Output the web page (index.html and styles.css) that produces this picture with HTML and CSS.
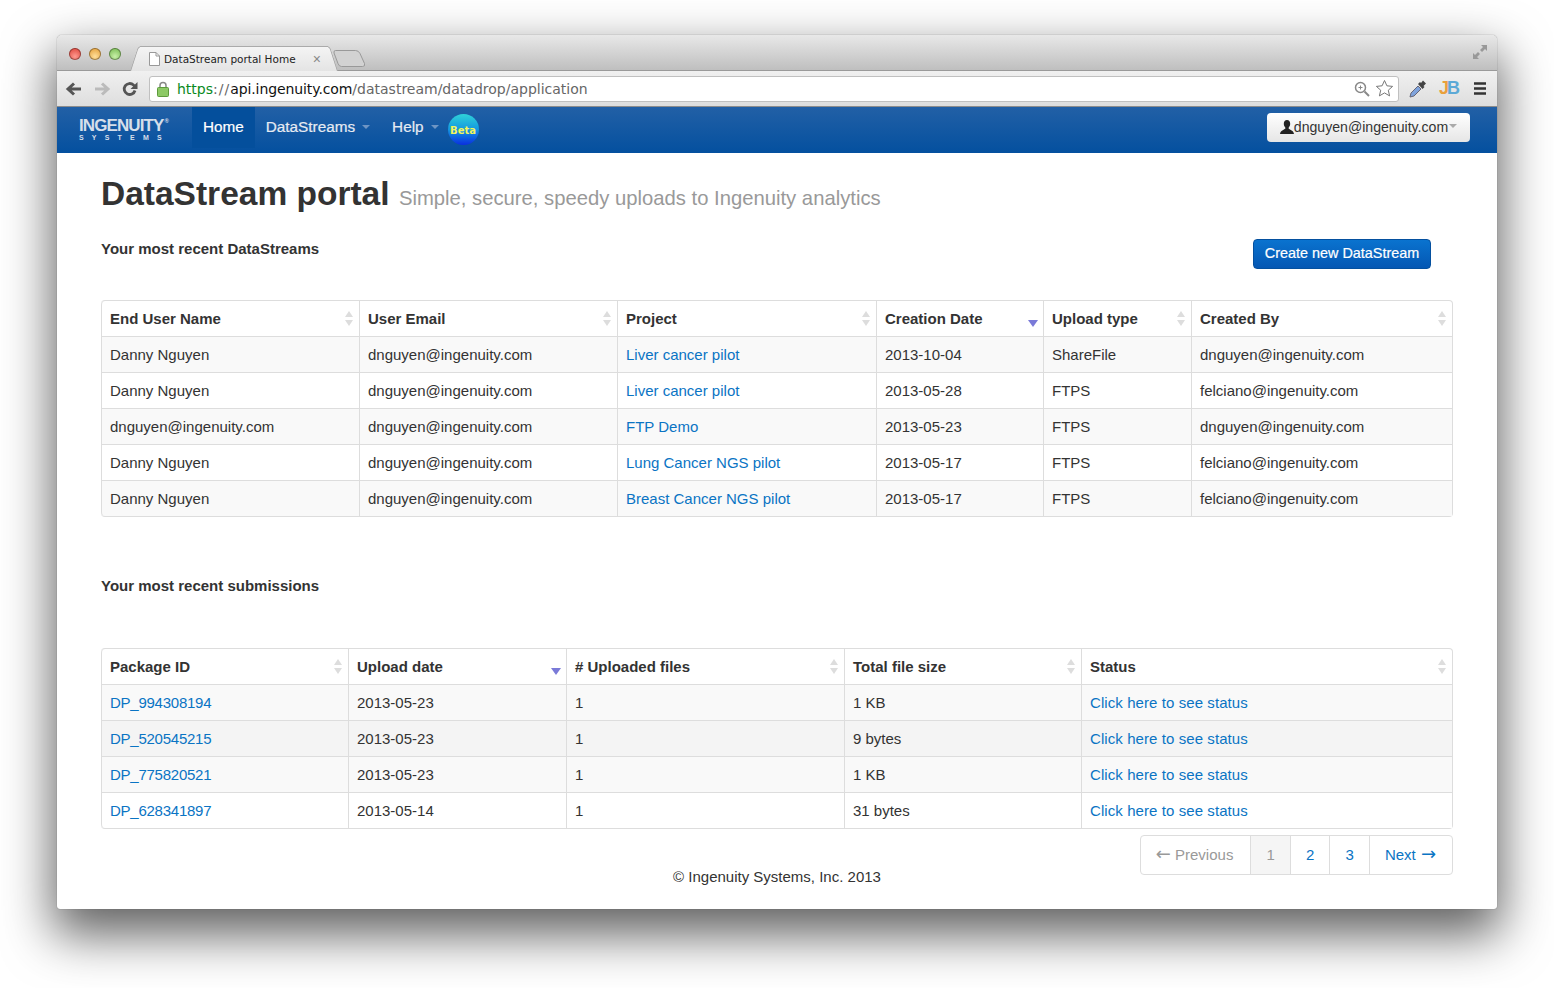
FILE: index.html
```html
<!DOCTYPE html>
<html lang="en">
<head>
    <meta charset="UTF-8">
    <title>DataStream portal Home</title>
    <link rel="stylesheet" href="styles.css">
</head>
<body>

<div class="window">
    <div class="tabstrip">
        <div class="lights">
            <span class="light red"></span>
            <span class="light amber"></span>
            <span class="light green"></span>
        </div>
        <div class="tab">
            <svg class="page-icon" width="11" height="14" viewBox="0 0 11 14"><path d="M.5.5h6.500l3.500 3.500v9.500h-10z" fill="#fff" stroke="#999"/><path d="M7 .5v3.500h3.500" fill="none" stroke="#999"/></svg>
            <span class="tab-title">DataStream portal Home</span>
            <span class="tab-close">&#215;</span>
        </div>
        <svg class="new-tab" width="33" height="17" viewBox="0 0 33 17"><path d="M2.500.5h20q3 0 4.500 3l4.500 10q1 3-2 3h-21q-2.500 0-3.500-3L1 3Q.5.500 2.500.5z" fill="#d2d2d2" stroke="#999"/></svg>
        <svg class="fullscreen" width="16" height="16" viewBox="0 0 16 16"><path d="M9 1h6v6l-2-2-3 3-2-2 3-3zM7 15H1V9l2 2 3-3 2 2-3 3z" fill="#999"/></svg>
    </div>

    <div class="toolbar">
        <svg class="tool" width="18" height="16" viewBox="0 0 18 16"><path d="M16 8H4M9 2.500 3 8l6 5.500" fill="none" stroke="#555" stroke-width="3"/></svg>
        <svg class="tool" width="18" height="16" viewBox="0 0 18 16"><path d="M2 8h12M9 2.500 15 8l-6 5.500" fill="none" stroke="#bbb" stroke-width="3"/></svg>
        <svg class="tool" width="18" height="18" viewBox="0 0 18 18"><path d="M14 10.500A5.500 5.500 0 1 1 12.500 5L15 7" fill="none" stroke="#555" stroke-width="2.800"/><path d="M16.500 2v7h-7z" fill="#555"/></svg>
        <div class="omnibox">
            <svg class="lock" width="12" height="16" viewBox="0 0 12 16"><path d="M3 7V4.500a3 3 0 0 1 6 0V7" fill="none" stroke="#888" stroke-width="1.500"/><rect x=".5" y="6.500" width="11" height="9" rx="1" fill="#8cc965" stroke="#5d9a3c"/></svg>
            <span class="url"><span class="url-scheme">https</span><span class="url-rest url-sep">://</span><span class="url-host">api.ingenuity.com</span><span class="url-rest">/datastream/datadrop/application</span></span>
            <svg class="zoom-icon" width="16" height="16" viewBox="0 0 16 16"><circle cx="6.500" cy="6.500" r="5" fill="none" stroke="#888" stroke-width="1.500"/><path d="M10.500 10.500 15 15" stroke="#888" stroke-width="2"/><path d="M4.500 6.500h4M6.500 4.500v4" stroke="#888"/></svg>
            <svg class="star" width="19" height="19" viewBox="0 0 19 19"><path d="m9.500 1.500 2.400 5.300 5.700.6-4.300 3.800 1.300 5.700-5.100-3-5.100 3 1.300-5.700L1.400 7.400l5.700-.6z" fill="#fff" stroke="#777"/></svg>
        </div>
        <svg class="dropper" width="20" height="20" viewBox="0 0 20 20"><path d="M2 18l1-4 7-7 3 3-7 7z" fill="#7fa3dc" stroke="#667"/><path d="M10 5l2-2 1 1 2-2.500 3 3L15.500 7l1 1-2 2z" fill="#444"/></svg>
        <span class="jb"><span class="jb-j">J</span><span class="jb-b">B</span></span>
        <svg class="menu-icon" width="14" height="13" viewBox="0 0 14 13"><path d="M1 1.500h12M1 6.500h12M1 11.500h12" stroke="#333" stroke-width="2.500"/></svg>
    </div>

    <nav class="navbar">
        <a class="brand">
            <span class="brand-name">INGENUITY<sup>&#174;</sup></span>
            <span class="brand-sub">SYSTEMS</span>
        </a>
        <ul class="nav">
            <li class="nav-item active">Home</li>
            <li class="nav-item">DataStreams<span class="caret"></span></li>
            <li class="nav-item">Help<span class="caret"></span></li>
        </ul>
        <span class="beta">Beta</span>
        <button class="user-btn">
            <svg width="14" height="14" viewBox="0 0 14 14"><path d="M7 0c2 0 3.200 1.500 3.200 3.700 0 1.700-.8 3-1.500 3.800v1.300C10 9.800 13.500 10.500 14 14H0c.5-3.500 4-4.200 5.300-5.200V7.500c-.7-.8-1.500-2.100-1.500-3.800C3.800 1.500 5 0 7 0z" fill="#222"/></svg>dnguyen@ingenuity.com<span class="caret dark"></span>
        </button>
    </nav>

    <div class="content">
        <h1>DataStream portal <small>Simple, secure, speedy uploads to Ingenuity analytics</small></h1>

        <div class="section-head">
            <h4>Your most recent DataStreams</h4>
            <button class="btn-primary">Create new DataStream</button>
        </div>

        <table class="data-table">
            <colgroup>
                <col class="c258"><col class="c258"><col class="c259"><col class="c167"><col class="c148"><col>
            </colgroup>
            <thead>
                <tr>
                    <th class="sortable">End User Name</th>
                    <th class="sortable">User Email</th>
                    <th class="sortable">Project</th>
                    <th class="sorted">Creation Date</th>
                    <th class="sortable">Upload type</th>
                    <th class="sortable">Created By</th>
                </tr>
            </thead>
            <tbody>
                <tr><td>Danny Nguyen</td><td>dnguyen@ingenuity.com</td><td><a>Liver cancer pilot</a></td><td>2013-10-04</td><td>ShareFile</td><td>dnguyen@ingenuity.com</td></tr>
                <tr><td>Danny Nguyen</td><td>dnguyen@ingenuity.com</td><td><a>Liver cancer pilot</a></td><td>2013-05-28</td><td>FTPS</td><td>felciano@ingenuity.com</td></tr>
                <tr><td>dnguyen@ingenuity.com</td><td>dnguyen@ingenuity.com</td><td><a>FTP Demo</a></td><td>2013-05-23</td><td>FTPS</td><td>dnguyen@ingenuity.com</td></tr>
                <tr><td>Danny Nguyen</td><td>dnguyen@ingenuity.com</td><td><a>Lung Cancer NGS pilot</a></td><td>2013-05-17</td><td>FTPS</td><td>felciano@ingenuity.com</td></tr>
                <tr><td>Danny Nguyen</td><td>dnguyen@ingenuity.com</td><td><a>Breast Cancer NGS pilot</a></td><td>2013-05-17</td><td>FTPS</td><td>felciano@ingenuity.com</td></tr>
            </tbody>
        </table>

        <h4 class="submissions-head">Your most recent submissions</h4>

        <table class="data-table submissions">
            <colgroup>
                <col class="c247"><col class="c218"><col class="c278"><col class="c237"><col>
            </colgroup>
            <thead>
                <tr>
                    <th class="sortable">Package ID</th>
                    <th class="sorted">Upload date</th>
                    <th class="sortable"># Uploaded files</th>
                    <th class="sortable">Total file size</th>
                    <th class="sortable">Status</th>
                </tr>
            </thead>
            <tbody>
                <tr><td><a>DP_994308194</a></td><td>2013-05-23</td><td>1</td><td>1 KB</td><td><a>Click here to see status</a></td></tr>
                <tr class="hovered"><td><a>DP_520545215</a></td><td>2013-05-23</td><td>1</td><td>9 bytes</td><td><a>Click here to see status</a></td></tr>
                <tr><td><a>DP_775820521</a></td><td>2013-05-23</td><td>1</td><td>1 KB</td><td><a>Click here to see status</a></td></tr>
                <tr><td><a>DP_628341897</a></td><td>2013-05-14</td><td>1</td><td>31 bytes</td><td><a>Click here to see status</a></td></tr>
            </tbody>
        </table>

        <ul class="pagination">
            <li class="page prev"><span class="arrow">&#8592;</span> Previous</li>
            <li class="page num current">1</li>
            <li class="page num">2</li>
            <li class="page num">3</li>
            <li class="page next">Next <span class="arrow">&#8594;</span></li>
        </ul>

        <p class="footer">&#169; Ingenuity Systems, Inc. 2013</p>
    </div>
</div>

</body>
</html>
```

FILE: styles.css
```css
html, body {
    height: 100%;
}
body {
    margin: 0;
    padding: 35px 57px 0;
    box-sizing: border-box;
    background: #fff;
    overflow: hidden;
    font-family: "Liberation Sans", Arial, sans-serif;
    font-size: 15px;
    color: #333;
}
.window {
    height: 874px;
    background: #fff;
    border-radius: 5px 5px 3px 3px;
    box-shadow: 0 0 1px 0 #555, 0 22px 50px 4px rgba(0, 0, 0, 0.62);
}

/* browser chrome */
.tabstrip {
    position: relative;
    z-index: 0;
    height: 36px;
    box-sizing: border-box;
    display: flex;
    align-items: flex-end;
    padding: 0 9px 0 12px;
    background: linear-gradient(#e8e8e8, #bfbfbf);
    border-radius: 5px 5px 0 0;
    border-bottom: 1px solid #9a9a9a;
}
.lights {
    display: flex;
    gap: 8px;
    align-self: flex-start;
    margin-top: 13px;
}
.light {
    width: 12px;
    height: 12px;
    border-radius: 50%;
    box-shadow: inset 0 0 0 1px rgba(0, 0, 0, 0.35);
}
.red {
    background: radial-gradient(circle at 50% 70%, #ff9a90, #d9382e);
}
.amber {
    background: radial-gradient(circle at 50% 70%, #ffdf9a, #e0962a);
}
.green {
    background: radial-gradient(circle at 50% 70%, #c8f0a8, #6cb345);
}
.tab {
    position: relative;
    width: 188px;
    height: 25px;
    box-sizing: border-box;
    margin: 0 0 -1px 19px;
    padding: 0 7px 0 9px;
    display: flex;
    align-items: center;
    gap: 4px;
    background: linear-gradient(#f4f4f4, #e4e4e4);
    border-top: 1px solid #aaa;
}
.tab::before,
.tab::after {
    content: "";
    position: absolute;
    top: -1px;
    bottom: 0;
    width: 20px;
    box-sizing: border-box;
    z-index: -1;
    background: linear-gradient(#f4f4f4, #e4e4e4);
    border-top: 1px solid #aaa;
}
.tab::before {
    left: -6px;
    border-left: 1px solid #aaa;
    border-radius: 4px 0 0 0;
    transform: skewX(-18deg);
}
.tab::after {
    right: -6px;
    border-right: 1px solid #aaa;
    border-radius: 0 4px 0 0;
    transform: skewX(18deg);
}
.tab-title {
    flex: 1;
    font-family: "DejaVu Sans", sans-serif;
    font-size: 10.500px;
    color: #222;
    white-space: nowrap;
}
.tab-close {
    font-size: 14px;
    color: #888;
}
.new-tab {
    margin: 0 0 3px 5px;
}
.fullscreen {
    margin-left: auto;
    align-self: flex-start;
    margin-top: 9px;
}
.toolbar {
    height: 36px;
    box-sizing: border-box;
    display: flex;
    align-items: center;
    padding: 0 10px 0 8px;
    background: linear-gradient(#f0f0f0, #dedede);
    border-bottom: 1px solid #8c8c8c;
}
.tool {
    margin-right: 10px;
    flex: none;
}
.omnibox {
    flex: 1;
    height: 26px;
    margin: 0 9px 0 0;
    box-sizing: border-box;
    display: flex;
    align-items: center;
    padding: 0 4px 0 7px;
    background: #fff;
    border: 1px solid #c0c0c0;
    border-radius: 3px;
}
.lock {
    margin-right: 8px;
}
.url {
    flex: 1;
    font-family: "DejaVu Sans", sans-serif;
    font-size: 14px;
    white-space: nowrap;
}
.url-scheme {
    color: #0a8a1e;
}
.url-rest {
    color: #666;
}
.url-sep {
    letter-spacing: 1px;
}
.url-host {
    color: #111;
    letter-spacing: -0.100px;
}
.zoom-icon {
    margin-right: 5px;
}
.dropper {
    margin-right: 11px;
}
.jb {
    width: 21px;
    margin-right: 13px;
    font-weight: bold;
    font-size: 18px;
    letter-spacing: -2px;
}
.jb-j {
    color: #e9a03c;
}
.jb-b {
    color: #5ca9d6;
}

/* navbar */
.navbar {
    height: 46px;
    display: flex;
    align-items: flex-start;
    padding: 0 27px 0 0;
    background: linear-gradient(#2260a6, #04509f);
}
.brand {
    width: 135px;
    height: 42px;
    box-sizing: border-box;
    padding: 10px 0 0 22px;
    color: #d6dfea;
    font-weight: bold;
    line-height: 1;
}
.brand-name {
    display: block;
    font-size: 17px;
    letter-spacing: -0.900px;
}
.brand-name sup {
    font-size: 6px;
    vertical-align: 8px;
    line-height: 0;
    margin-left: 1px;
}
.brand-sub {
    display: block;
    font-size: 7px;
    letter-spacing: 8.200px;
}
.nav {
    list-style: none;
    margin: 0;
    padding: 0;
    display: flex;
}
.nav-item {
    height: 41px;
    padding: 0 11px;
    line-height: 40px;
    font-size: 15.300px;
    color: #e6ebf2;
    -webkit-text-stroke: 0.200px;
}
.nav-item.active {
    color: #fff;
    background: #044f9c;
}
.caret {
    display: inline-block;
    margin: 0 0 1px 7px;
    border-left: 4px solid transparent;
    border-right: 4px solid transparent;
    border-top: 4px solid #6f95c4;
    vertical-align: middle;
}
.caret.dark {
    margin-left: 1px;
    border-top-color: #aaa;
}
.beta {
    width: 31px;
    height: 31px;
    margin: 7px 0 0 -2px;
    border-radius: 50%;
    background: linear-gradient(#2fd3d8, #1397e0 50%, #0a2ee0);
    color: #f3f55a;
    font-family: "DejaVu Sans", sans-serif;
    font-size: 10px;
    font-weight: bold;
    line-height: 33px;
    text-align: center;
}
.user-btn {
    margin: 6px 0 0 auto;
    height: 29px;
    width: 203px;
    padding: 0 0 2px;
    display: flex;
    align-items: center;
    justify-content: center;
    background: linear-gradient(#fff, #e6e6e6);
    border: none;
    border-radius: 4px;
    font-family: inherit;
    font-size: 14.100px;
    color: #333;
}

/* page */
.content {
    padding: 0 44px;
}
h1 {
    margin: 0;
    padding-top: 21px;
    font-size: 33.500px;
    line-height: 40px;
    color: #333;
}
h1 small {
    font-size: 20.250px;
    font-weight: normal;
    color: #999;
}
h4 {
    margin: 0;
    font-size: 15px;
    line-height: 20px;
}
.section-head {
    display: flex;
    justify-content: space-between;
    align-items: flex-start;
    height: 75px;
    padding: 21px 22px 0 0;
    box-sizing: border-box;
    margin-bottom: 7px;
}
.btn-primary {
    width: 178px;
    height: 30px;
    padding: 0 0 2px;
    background: linear-gradient(#0a73cf, #0457b3);
    border: 1px solid #04509f;
    border-radius: 4px;
    color: #fff;
    font-family: inherit;
    font-size: 14.400px;
    -webkit-text-stroke: 0.200px;
}
.data-table {
    width: 100%;
    table-layout: fixed;
    border-collapse: separate;
    border-spacing: 0;
    border: 1px solid #ddd;
    border-left: none;
    border-radius: 4px;
}
.c258 { width: 258px; }
.c259 { width: 259px; }
.c167 { width: 167px; }
.c148 { width: 148px; }
.c247 { width: 247px; }
.c218 { width: 218px; }
.c278 { width: 278px; }
.c237 { width: 237px; }
th, td {
    height: 35px;
    box-sizing: border-box;
    padding: 8px 8px 7px;
    line-height: 20px;
    text-align: left;
    border-left: 1px solid #ddd;
    white-space: nowrap;
}
td {
    height: 36px;
    border-top: 1px solid #ddd;
}
tbody tr:nth-child(odd) td {
    background: #f9f9f9;
}
.data-table a {
    color: #0a74c4;
}
.submissions tbody tr:last-child td {
    background: #fff;
}
.submissions tbody tr.hovered td {
    background: #f4f4f4;
}
.submissions td:first-child a {
    letter-spacing: -0.250px;
}
.submissions td:last-child a {
    letter-spacing: 0.080px;
}
.data-table tr:first-child th:first-child {
    border-top-left-radius: 4px;
}
.data-table tr:last-child td:first-child {
    border-bottom-left-radius: 4px;
}
th {
    position: relative;
}
.sortable::before,
.sortable::after {
    content: "";
    position: absolute;
    right: 6px;
    border-left: 4px solid transparent;
    border-right: 4px solid transparent;
}
.sortable::before {
    top: 10px;
    border-bottom: 6px solid #ddd;
}
.sortable::after {
    top: 19px;
    border-top: 6px solid #ddd;
}
.sorted::after {
    content: "";
    position: absolute;
    right: 5px;
    top: 19px;
    border-left: 5px solid transparent;
    border-right: 5px solid transparent;
    border-top: 7px solid #7a7ad8;
}
.submissions-head {
    margin: 59px 0 52px;
}
.pagination {
    list-style: none;
    display: flex;
    width: fit-content;
    margin: 6px 0 0 auto;
    padding: 0;
    border: 1px solid #ddd;
    border-radius: 4px;
}
.page {
    height: 38px;
    padding: 0 15px;
    line-height: 38px;
    color: #0a74c4;
    border-left: 1px solid #ddd;
}
.page.prev {
    padding-right: 17px;
    border-left: none;
    color: #999;
}
.page.next {
    padding-right: 16px;
}
.page.num {
    width: 38.500px;
    padding: 0;
    text-align: center;
}
.page.current {
    background: #f5f5f5;
    color: #999;
}
.arrow {
    font-family: "DejaVu Sans", sans-serif;
    font-size: 18px;
    line-height: 1;
}
.next .arrow {
    margin-left: 1px;
}
.footer {
    margin: -8px 0 0;
    line-height: 20px;
    text-align: center;
    font-size: 15px;
}
```
